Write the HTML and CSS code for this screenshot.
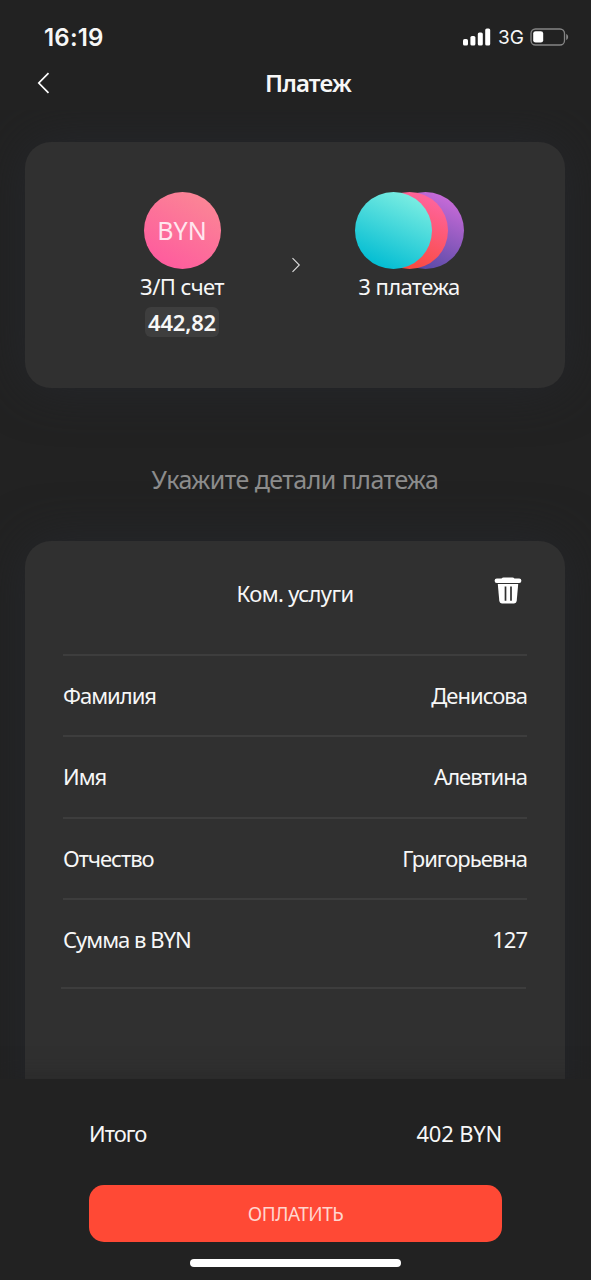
FILE: index.html
```
<!DOCTYPE html>
<html lang="ru">
<head>
    <meta charset="UTF-8">
    <meta name="viewport" content="width=device-width, initial-scale=1.0">
    <title>Платеж</title>
    <link rel="stylesheet" href="styles.css">
</head>
<body>
    <div class="app">
        <div class="status-bar">
            <span class="time">16:19</span>
            <div class="status-icons">
                <svg class="signal" width="28" height="18" viewBox="0 0 28 18" fill="#fff">
                    <rect x="0" y="11" width="5" height="6.5" rx="1.6"/>
                    <rect x="7.4" y="8" width="5" height="9.5" rx="1.6"/>
                    <rect x="14.8" y="4.5" width="5" height="13" rx="1.6"/>
                    <rect x="22.2" y="0.5" width="5" height="17" rx="1.6"/>
                </svg>
                <span class="network">3G</span>
                <svg class="battery" width="40" height="18" viewBox="0 0 40 18">
                    <rect x="1" y="1" width="33.5" height="16" rx="4.5" fill="none" stroke="#858585" stroke-width="1.3"/>
                    <rect x="3.2" y="3.2" width="10" height="11.4" rx="2.4" fill="#fff"/>
                    <path d="M36.2 6c2.6 1 2.6 5 0 6z" fill="#858585"/>
                </svg>
            </div>
        </div>

        <header class="header">
            <svg class="back" width="14" height="22" viewBox="0 0 14 22">
                <path d="M11.5 1.2 1.8 11l9.7 9.8" fill="none" stroke="#fff" stroke-width="1.7"/>
            </svg>
            <h1>Платеж</h1>
        </header>

        <main class="content">
            <section class="card transfer">
                <div class="account">
                    <div class="circle byn">BYN</div>
                    <div class="account-name">З/П счет</div>
                    <div class="balance">442,82</div>
                </div>
                <svg class="arrow" width="10" height="16" viewBox="0 0 10 16">
                    <path d="M1.5 1.2 8.3 8l-6.8 6.8" fill="none" stroke="#ddd" stroke-width="1.1"/>
                </svg>
                <div class="account">
                    <div class="stack">
                        <div class="circle teal"></div>
                        <div class="circle red"></div>
                        <div class="circle purple"></div>
                    </div>
                    <div class="account-name">3 платежа</div>
                </div>
            </section>

            <h2 class="hint">Укажите детали платежа</h2>

            <section class="card details">
                <div class="details-header">
                    <h3>Ком. услуги</h3>
                    <svg class="trash" width="28" height="28" viewBox="0 0 28 28" fill="#fff">
                        <path d="M7.5 1.6Q8.3.4 9.5.4h9q1.200 0 2 1.200h4.700a2.200 2.200 0 0 1 0 4.400H2.800a2.200 2.200 0 0 1 0-4.400z"/>
                        <path d="M3.800 7h20.400l-1.500 17q-.3 2.400-2.600 2.400H7.900Q5.600 26.400 5.300 24z"/>
                        <path d="M11.500 9.500v14.200M17 9.500v14.200" stroke="#303030" stroke-width="1.700"/>
                    </svg>
                </div>
                <div class="row"><span>Фамилия</span><span>Денисова</span></div>
                <div class="row"><span>Имя</span><span>Алевтина</span></div>
                <div class="row"><span>Отчество</span><span>Григорьевна</span></div>
                <div class="row"><span>Сумма в BYN</span><span>127</span></div>
                <div class="details-end"></div>
            </section>
        </main>

        <footer class="footer">
            <div class="total"><span>Итого</span><span class="sum">402 BYN</span></div>
            <button>ОПЛАТИТЬ</button>
            <div class="home-indicator"></div>
        </footer>
    </div>
</body>
</html>
```
FILE: styles.css
```
* {
    box-sizing: border-box;
}
body {
    margin: 0;
    background: #222;
    color: #f7f7f7;
    font-family: 'Noto Sans', 'Open Sans', sans-serif;
    font-size: 22px;
}
h1, h2, h3 {
    margin: 0;
    font-weight: 400;
}
.app {
    display: flex;
    flex-direction: column;
    height: 1280px;
    overflow: hidden;
}
.status-bar {
    display: flex;
    justify-content: space-between;
    align-items: center;
    height: 56px;
    padding: 18px 21px 0 44px;
    font-family: Inter, sans-serif;
}
.time {
    font-size: 24px;
    font-weight: 600;
    letter-spacing: 0.2px;
}
.status-icons {
    display: flex;
    align-items: center;
}
.network {
    font-size: 19px;
    margin: 0 6px 0 7px;
}
.header {
    display: grid;
    grid-template-columns: 85px 1fr 60px;
    align-items: center;
    height: 54px;
}
.back {
    margin-left: 37px;
}
h1 {
    padding-bottom: 2px;
    font-size: 24px;
    font-weight: 600;
    letter-spacing: -0.8px;
    text-align: center;
}
.content {
    flex: 1;
    min-height: 0;
    padding: 32px 26px 0 25px;
    overflow: hidden;
}
.card {
    background: #303030;
    border-radius: 26px;
    box-shadow: 0 0 50px rgba(38, 40, 46, 0.8);
}
.transfer {
    display: flex;
    height: 246px;
    padding: 50px 89px 0 90px;
    justify-content: space-between;
}
.account {
    display: flex;
    flex-direction: column;
    align-items: center;
    width: 134px;
}
.circle {
    width: 77px;
    height: 77px;
    border-radius: 50%;
    flex: none;
}
.byn {
    display: flex;
    align-items: center;
    justify-content: center;
    padding-bottom: 2px;
    background: linear-gradient(30deg, #ff559f, #fa8c94);
    color: #ffe6ee;
    font-size: 25px;
}
.stack {
    display: flex;
}
.stack .circle + .circle {
    margin-left: -61px;
}
.teal {
    z-index: 3;
    background: linear-gradient(25deg, #00bcd2 10%, #8cf4e4);
}
.red {
    z-index: 2;
    background: linear-gradient(25deg, #f94b43 20%, #ff6398 85%);
}
.purple {
    z-index: 1;
    background: linear-gradient(25deg, #584aa6 15%, #c96bd9 90%);
}
.account-name {
    height: 38px;
    letter-spacing: -0.6px;
    line-height: 35px;
    white-space: nowrap;
}
.balance {
    padding: 0 3px;
    border-radius: 6px;
    background: #3e3e3e;
    font-weight: 600;
    letter-spacing: -0.2px;
    line-height: 30px;
}
.arrow {
    margin-top: 65px;
}
.hint {
    height: 153px;
    padding-top: 75px;
    color: #8c8c8c;
    font-size: 25px;
    letter-spacing: -0.55px;
    line-height: 32px;
    text-align: center;
}
.details {
    height: 600px;
    padding: 0 38px;
}
.details-header {
    display: grid;
    grid-template-columns: 33px 1fr 33px;
    height: 113px;
    padding-top: 36px;
}
h3 {
    grid-column: 2;
    font-size: 22px;
    letter-spacing: -0.6px;
    line-height: 33px;
    text-align: center;
}
.row {
    display: flex;
    justify-content: space-between;
    height: 81.4px;
    border-top: 2px solid #3d3d3d;
    letter-spacing: -1px;
    line-height: 78px;
}
.details-end {
    height: 2px;
    margin: 7px 1px 0 -2px;
    background: #3d3d3d;
}
.footer {
    position: relative;
    display: flex;
    flex-direction: column;
    height: 201px;
    padding: 38px 89px 0;
    background: #222;
    box-shadow: 0 0 22px rgba(34, 34, 34, 0.6);
}
.total {
    display: flex;
    justify-content: space-between;
    height: 68px;
    letter-spacing: -1px;
    line-height: 32px;
}
.sum {
    letter-spacing: -0.2px;
}
button {
    height: 57px;
    border: none;
    border-radius: 15px;
    background: #ff4935;
    color: #ffd6cf;
    font-family: inherit;
    font-size: 19px;
    letter-spacing: -0.5px;
}
.home-indicator {
    align-self: center;
    width: 211px;
    height: 8px;
    margin-top: 17px;
    border-radius: 4px;
    background: #fff;
}
```
